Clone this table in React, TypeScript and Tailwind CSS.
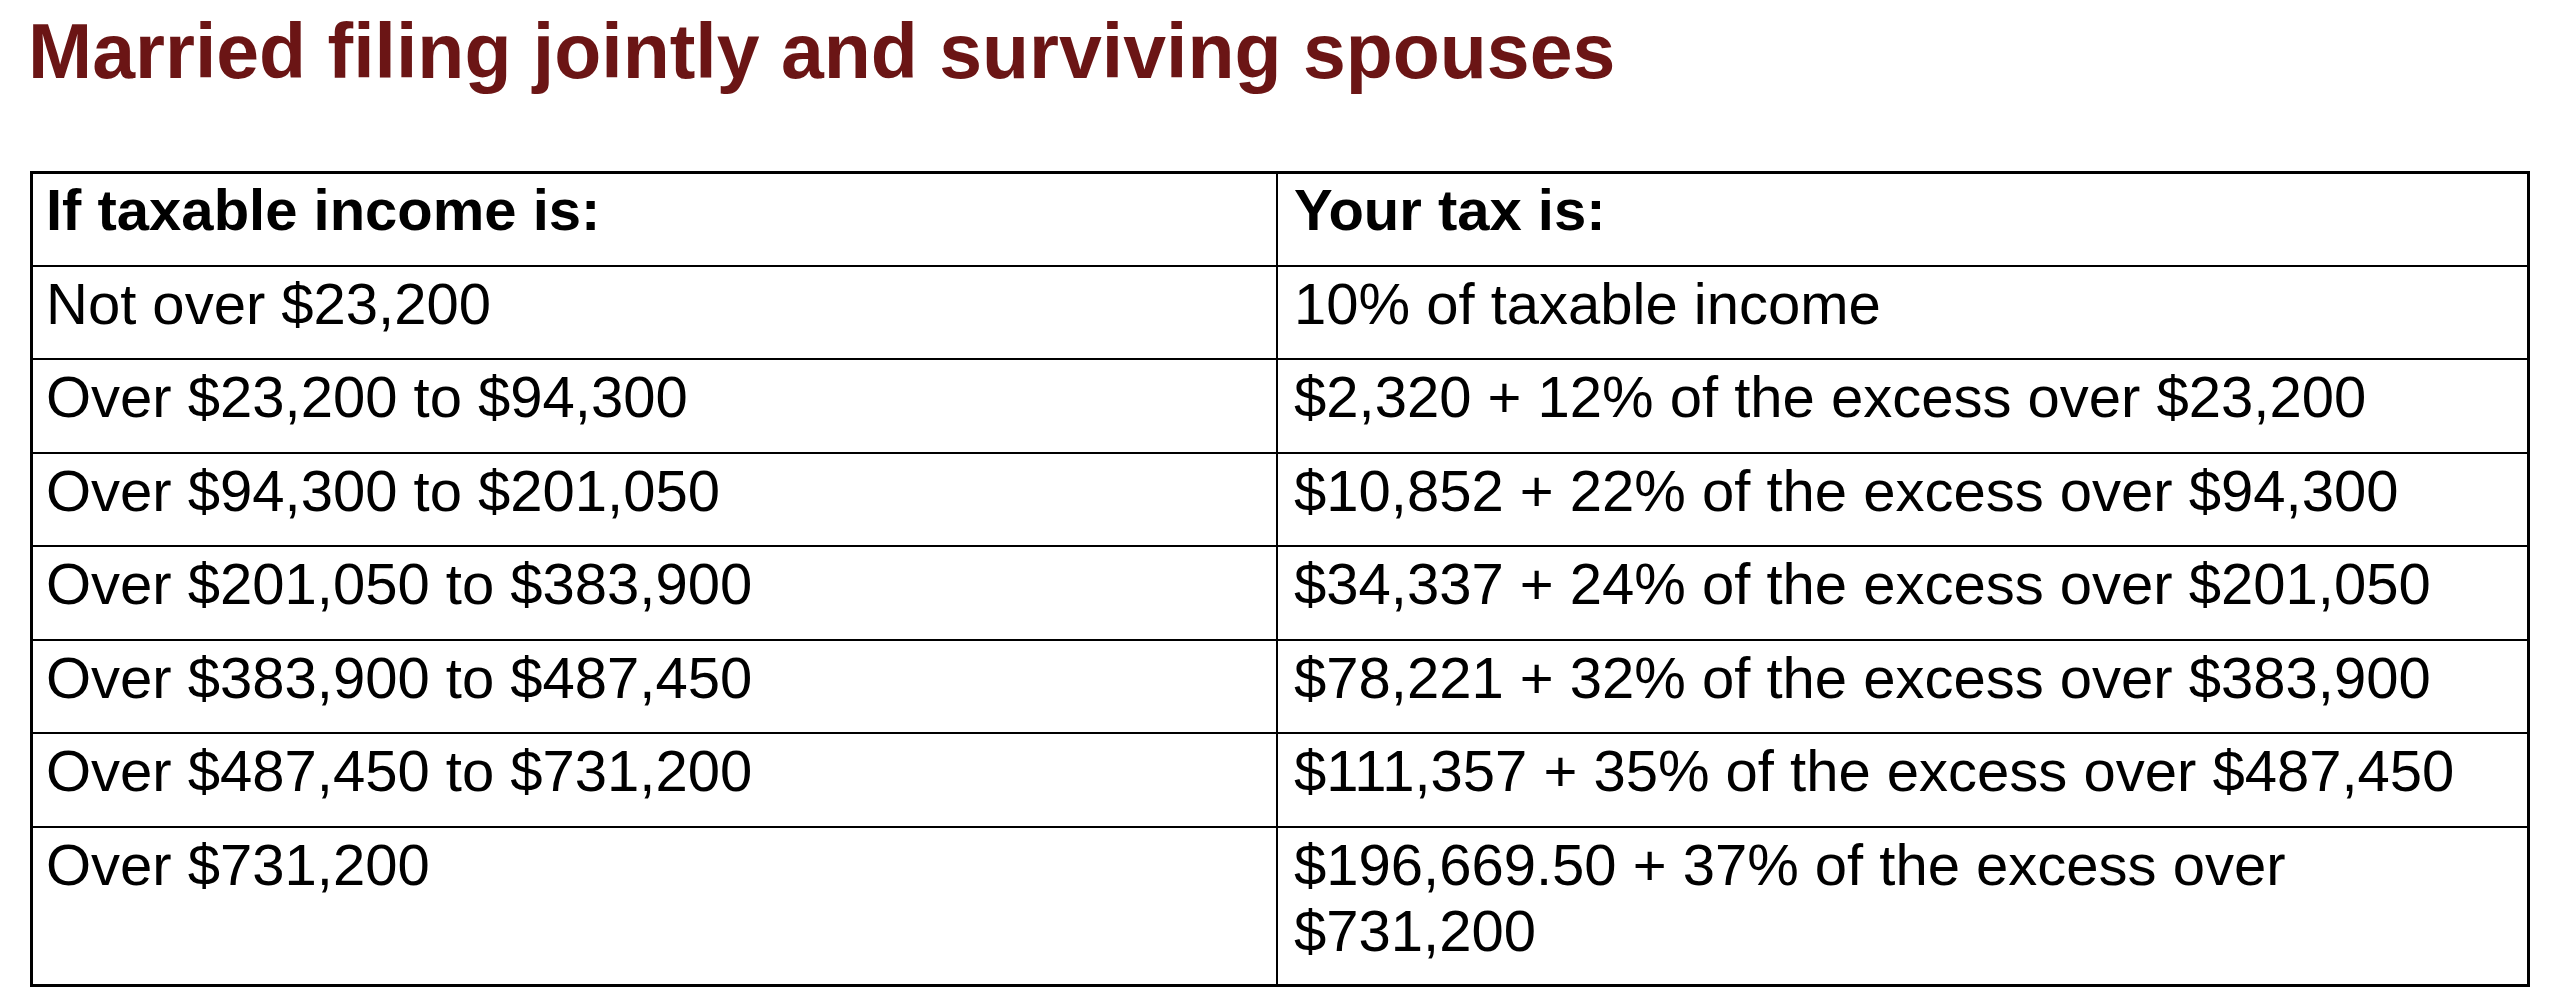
import React from "react";

const rows: [string, string][] = [
  ["Not over $23,200", "10% of taxable income"],
  ["Over $23,200 to $94,300", "$2,320 + 12% of the excess over $23,200"],
  ["Over $94,300 to $201,050", "$10,852 + 22% of the excess over $94,300"],
  ["Over $201,050 to $383,900", "$34,337 + 24% of the excess over $201,050"],
  ["Over $383,900 to $487,450", "$78,221 + 32% of the excess over $383,900"],
  ["Over $487,450 to $731,200", "$111,357 + 35% of the excess over $487,450"],
];

export default function App() {
  return (
    <div
      className="w-[2560px] h-[1006px] bg-white text-black overflow-hidden"
      style={{ fontFamily: '"Liberation Sans", Arial, sans-serif' }}
    >
      <h1 className="pl-[28px] pt-[7px] text-[77px] font-bold leading-[1.15] text-[#6b1515]">
        Married filing jointly and surviving spouses
      </h1>
      <div className="ml-[30px] mt-[75px] w-[2500px] border-[3px] border-black text-[58px] leading-[66px]">
        <div className="grid grid-cols-[1245px_1fr] h-[91px]">
          <div className="pl-[13px] pt-[3px] font-bold border-r-2 border-black">If taxable income is:</div>
          <div className="pl-[16px] pt-[3px] font-bold">Your tax is:</div>
        </div>
        {rows.map(([a, b]) => (
          <div key={a} className="grid grid-cols-[1245px_1fr] h-[93.5px] border-t-2 border-black">
            <div className="pl-[13px] pt-[4px] border-r-2 border-black">{a}</div>
            <div className="pl-[16px] pt-[4px]">{b}</div>
          </div>
        ))}
        <div className="grid grid-cols-[1245px_1fr] h-[158px] border-t-2 border-black">
          <div className="pl-[13px] pt-[4px] border-r-2 border-black">Over $731,200</div>
          <div className="pl-[16px] pt-[4px] pr-[120px]">$196,669.50 + 37% of the excess over $731,200</div>
        </div>
      </div>
    </div>
  );
}
